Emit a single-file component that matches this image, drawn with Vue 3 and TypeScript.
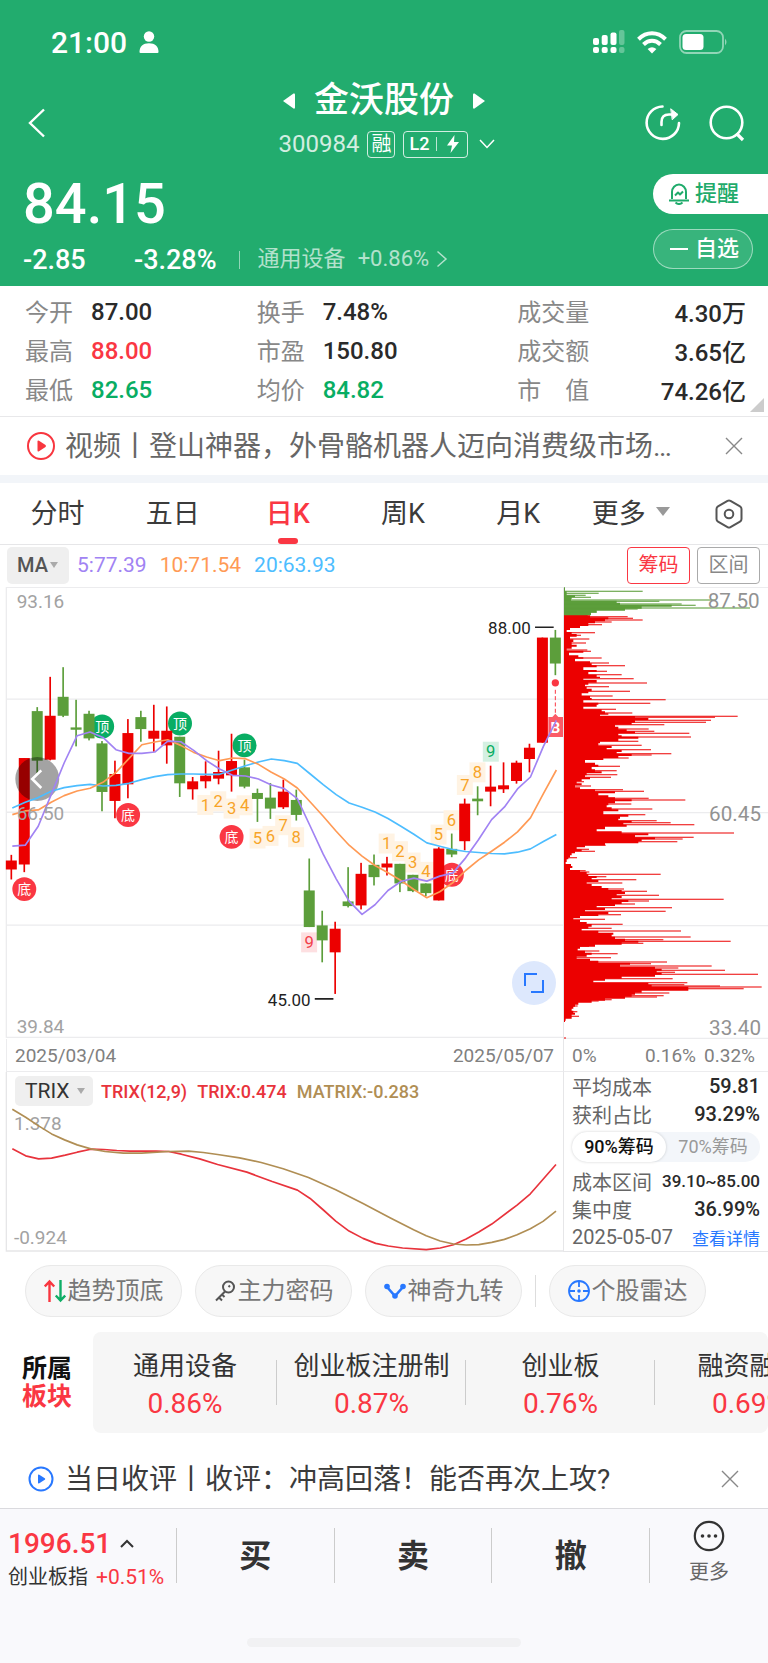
<script setup lang="ts">
import { ref } from 'vue'

type Tone = 'up' | 'down' | 'plain'
interface Quote { label: string; value: string; tone: Tone }
type Pair = [number, number]

const quotes: Quote[] = [
  { label: '今开', value: '87.00', tone: 'plain' },
  { label: '换手', value: '7.48%', tone: 'plain' },
  { label: '成交量', value: '4.30万', tone: 'plain' },
  { label: '最高', value: '88.00', tone: 'up' },
  { label: '市盈', value: '150.80', tone: 'plain' },
  { label: '成交额', value: '3.65亿', tone: 'plain' },
  { label: '最低', value: '82.65', tone: 'down' },
  { label: '均价', value: '84.82', tone: 'down' },
  { label: '市　值', value: '74.26亿', tone: 'plain' },
]

const tabs = ['分时', '五日', '日K', '周K', '月K']
const activeTab = ref('日K')
const chipRange = ref('90%筹码')

const sectors = [
  { name: '通用设备', change: '0.86%' },
  { name: '创业板注册制', change: '0.87%' },
  { name: '创业板', change: '0.76%' },
  { name: '融资融券', change: '0.69%' },
]
const trades = ['买', '卖', '撤']

const STEP = 38.93
const cx = (i: number) => 34 + i * STEP

// wick top, body top, body bottom, wick bottom, rising
const candles: [number, number, number, number, number][] = [
  [826, 843, 870, 900, 1], [535, 535, 855, 878, 1], [382, 394, 543, 580, 0], [291, 408, 540, 542, 1],
  [262, 351, 408, 412, 0], [360, 443, 450, 500, 0], [393, 402, 476, 482, 0], [484, 491, 637, 695, 0],
  [543, 583, 664, 716, 1], [418, 460, 614, 656, 1], [393, 412, 448, 486, 0], [375, 453, 477, 516, 1],
  [380, 453, 497, 552, 1], [471, 471, 611, 652, 0], [592, 605, 629, 660, 1], [545, 588, 605, 626, 1],
  [513, 577, 597, 614, 1], [462, 544, 587, 636, 1], [540, 563, 621, 626, 0], [627, 640, 658, 727, 0],
  [610, 654, 687, 718, 0], [600, 636, 683, 688, 1], [630, 661, 706, 723, 0], [837, 933, 1043, 1043, 0],
  [994, 1038, 1083, 1149, 0], [1027, 1048, 1119, 1244, 1], [863, 966, 980, 984, 0], [850, 883, 978, 990, 1],
  [825, 856, 893, 918, 0], [832, 852, 864, 888, 1], [853, 853, 912, 938, 0], [886, 886, 935, 938, 0],
  [912, 912, 941, 950, 0], [803, 807, 963, 963, 1], [762, 808, 825, 833, 0], [657, 672, 785, 812, 1],
  [620, 657, 665, 707, 0], [558, 621, 636, 680, 1], [548, 617, 629, 640, 1], [543, 549, 604, 612, 1],
  [492, 504, 538, 578, 1], [173, 173, 489, 489, 1], [150, 173, 251, 286, 0],
]

const ma5 = [800, 797, 740, 645, 550, 468, 457, 473, 510, 521, 521, 517, 484, 486, 512, 543, 568, 587, 589, 598, 616, 627, 657, 740, 824, 898, 965, 1005, 976, 933, 906, 896, 905, 890, 881, 835, 780, 720, 682, 628, 592, 500, 422]
const ma10 = [705, 694, 691, 668, 648, 634, 626, 608, 578, 537, 495, 487, 480, 497, 518, 532, 543, 535, 537, 554, 578, 598, 625, 667, 710, 755, 797, 830, 858, 880, 903, 930, 955, 937, 910, 873, 841, 815, 788, 757, 715, 642, 571]
const ma20 = [685, 668, 654, 635, 624, 618, 614, 619, 617, 611, 600, 591, 585, 583, 583, 584, 584, 571, 558, 547, 538, 543, 551, 583, 615, 645, 670, 683, 697, 717, 740, 764, 790, 800, 810, 816, 819, 822, 823, 818, 808, 786, 765]
const series = (ys: number[]) => ys.map((y, i) => `${(cx(i) + 3).toFixed(1)},${y}`).join(' ')
const averages = [
  { color: '#4dbdff', points: series(ma20) },
  { color: '#ff9a55', points: series(ma10) },
  { color: '#a183f3', points: series(ma5) },
]

const marks = [
  { x: 73, y: 929, t: '底' }, { x: 385, y: 706, t: '底' }, { x: 696, y: 772, t: '底' }, { x: 1358, y: 886, t: '底' },
  { x: 307, y: 440, t: '顶' }, { x: 541, y: 431, t: '顶' }, { x: 735, y: 497, t: '顶' },
]

const counts = [
  { x: 617, y: 675, t: '1' }, { x: 656, y: 664, t: '2' }, { x: 696, y: 686, t: '3' }, { x: 735, y: 676, t: '4' },
  { x: 774, y: 776, t: '5' }, { x: 813, y: 768, t: '6' }, { x: 851, y: 736, t: '7' }, { x: 890, y: 772, t: '8' },
  { x: 929, y: 1088, t: '9', k: 'low' },
  { x: 1162, y: 791, t: '1' }, { x: 1202, y: 814, t: '2' }, { x: 1240, y: 848, t: '3' }, { x: 1280, y: 876, t: '4' },
  { x: 1318, y: 764, t: '5' }, { x: 1357, y: 721, t: '6' }, { x: 1397, y: 615, t: '7' }, { x: 1435, y: 577, t: '8' },
  { x: 1475, y: 515, t: '9', k: 'high' },
]

// Holding cost distribution: [price offset, extent]
const greenBase: Pair[] = [[22, 30], [34, 35], [46, 60], [52, 50], [58, 48], [62, 185], [68, 195], [74, 350], [80, 260], [86, 210], [92, 125], [98, 108], [106, 98]]
const greenPeaks: Pair[] = [[34, 263], [40, 131], [46, 92], [52, 108], [60, 480], [64, 313], [72, 380], [76, 422], [84, 585], [87, 248], [96, 125]]
const redBase: Pair[] = [
  [106, 105], [112, 160], [118, 150], [124, 120], [130, 100], [138, 75], [144, 45], [150, 35], [156, 50], [162, 65], [170, 45], [178, 55], [186, 50], [194, 65], [200, 50], [206, 35], [212, 85], [218, 42], [226, 70], [232, 85], [236, 60], [244, 105], [250, 110], [256, 125], [262, 85], [270, 125], [276, 100], [284, 125], [290, 135], [294, 85], [300, 125], [308, 100], [314, 90], [320, 95], [326, 110], [334, 100], [340, 80], [348, 105], [354, 110], [360, 85], [368, 130], [374, 125], [380, 85], [388, 140], [394, 150], [400, 160], [404, 135], [408, 240], [414, 280], [420, 240], [428, 230], [434, 180], [440, 190], [448, 215], [454, 240], [460, 190], [466, 200], [470, 250], [476, 190], [484, 135], [490, 130], [498, 170], [504, 155], [510, 200], [516, 185], [522, 230], [528, 190], [534, 145], [540, 90], [548, 120], [554, 130], [560, 110], [568, 120], [574, 140], [580, 95], [586, 90], [592, 105], [598, 80], [604, 65], [610, 80], [616, 60], [622, 75], [628, 120], [634, 180], [640, 130], [646, 160], [652, 180], [658, 230], [664, 180], [670, 160], [676, 155], [682, 170], [688, 190], [694, 145],
  [698, 145], [704, 220], [710, 195], [716, 190], [722, 230], [728, 205], [734, 215], [740, 150], [748, 125], [754, 200], [760, 280], [766, 240], [772, 300], [778, 260], [784, 250], [790, 150], [796, 90], [802, 65], [808, 80], [814, 60], [820, 50], [826, 45], [832, 40], [838, 35], [846, 32], [852, 48], [858, 52], [864, 45], [870, 75], [876, 95], [882, 100], [888, 125], [894, 110], [900, 130], [906, 95], [912, 110], [918, 140], [924, 160], [930, 200], [936, 210], [942, 185], [948, 200], [954, 170], [960, 220], [966, 200], [972, 180], [978, 125], [984, 150], [990, 90], [996, 160], [1002, 130], [1008, 75], [1014, 55], [1020, 75], [1026, 95], [1032, 110], [1040, 100], [1046, 80], [1052, 130], [1058, 175], [1064, 170], [1070, 180], [1076, 210], [1082, 250], [1088, 200], [1094, 120], [1100, 75], [1106, 68], [1112, 90], [1118, 110], [1124, 95], [1130, 65], [1136, 105], [1142, 130], [1148, 225], [1154, 195], [1160, 300], [1166, 320], [1172, 305], [1178, 320], [1184, 300], [1190, 200], [1196, 150], [1202, 115], [1208, 280], [1214, 290], [1220, 400], [1226, 400], [1232, 260], [1238, 240], [1244, 230], [1250, 210], [1256, 150], [1262, 110], [1268, 70], [1274, 60], [1280, 55], [1286, 50], [1292, 55], [1298, 60], [1304, 50], [1310, 50], [1316, 32], [1322, 30],
]
const redPeaks: Pair[] = [
  [110, 218], [115, 234], [120, 263], [126, 170], [134, 141], [158, 120], [166, 78], [177, 103], [189, 93], [210, 97], [214, 108], [234, 140], [249, 162], [257, 210], [274, 156], [284, 200], [296, 236], [309, 276], [320, 162], [334, 225], [348, 173], [359, 332], [370, 286], [388, 183], [399, 232], [409, 548], [412, 480], [421, 468], [427, 453], [434, 328], [447, 281], [454, 298], [460, 403], [471, 408], [484, 250], [496, 260], [509, 288], [521, 349], [525, 290], [534, 221], [559, 195], [572, 185], [584, 187], [592, 168], [605, 87], [618, 108], [629, 204], [634, 267], [655, 281], [660, 391], [672, 229], [687, 292], [704, 271],
  [722, 305], [728, 347], [734, 418], [759, 537], [772, 416], [777, 383], [785, 367], [796, 152], [808, 102], [814, 120], [833, 66], [872, 92], [876, 103], [883, 317], [890, 154], [899, 244], [909, 202], [927, 207], [934, 276], [946, 312], [958, 506], [963, 282], [972, 240], [983, 351], [994, 332], [1004, 198], [1018, 150], [1033, 203], [1045, 170], [1053, 378], [1071, 407], [1079, 325], [1084, 527], [1090, 265], [1099, 102], [1113, 133], [1121, 188], [1133, 168], [1146, 336], [1151, 288], [1158, 470], [1164, 370], [1171, 510], [1177, 360], [1183, 609], [1196, 353], [1208, 397], [1214, 388], [1218, 495], [1221, 620], [1226, 566], [1239, 343], [1247, 326], [1251, 306], [1259, 170], [1263, 131], [1278, 68], [1295, 67], [1309, 72], [1374, 33],
]
const outline = (rows: Pair[]) => {
  const sorted = [...rows].sort((a, b) => a[0] - b[0])
  return `M27 ${sorted[0][0]} ` + sorted.map(([y, x]) => `V${y} H${x}`).join(' ') + ` V${sorted[sorted.length - 1][0] + 4} H27 Z`
}
const greenOutline = outline(greenBase)
const redOutline = outline(redBase)

const trixLine: Pair[] = [[34, 267], [71, 288], [106, 297], [142, 295], [180, 286], [213, 277], [250, 268], [286, 269], [322, 272], [358, 274], [430, 274], [465, 275], [500, 283], [550, 297], [600, 314], [680, 337], [750, 365], [820, 391], [855, 416], [890, 450], [925, 484], [962, 514], [1000, 536], [1035, 551], [1070, 559], [1110, 565], [1175, 570], [1213, 565], [1250, 555], [1285, 538], [1320, 517], [1355, 493], [1425, 436], [1462, 402], [1532, 314]]
const matrixLine: Pair[] = [[34, 148], [71, 172], [106, 198], [142, 222], [178, 240], [213, 255], [250, 267], [290, 275], [340, 280], [390, 280], [465, 275], [520, 274], [560, 278], [600, 284], [660, 294], [720, 308], [780, 327], [850, 353], [925, 390], [1000, 431], [1075, 474], [1140, 510], [1175, 528], [1213, 544], [1250, 553], [1285, 556], [1320, 555], [1355, 548], [1390, 539], [1425, 525], [1462, 507], [1497, 485], [1532, 454]]
const widen = (pts: Pair[]) => pts.map(([x, y]) => `${Math.round(x * 1.0905)},${y}`).join(' ')
</script>

<template>
  <div class="app">
    <header class="hero">
      <div class="status">
        <div class="clock">
          <span>21:00</span>
          <svg width="20" height="22" viewBox="0 0 20 22" fill="#fff"><circle cx="10" cy="5.5" r="5.2" /><path d="M0.5 21C0.5 15 4 12.2 10 12.2S19.5 15 19.5 21Q19.5 22 18.5 22H1.5Q.5 22 .5 21Z" /></svg>
        </div>
        <div class="phone">
          <svg width="32" height="24" viewBox="0 0 32 24" fill="#fff">
            <rect x="0" y="8" width="6" height="7" rx="2" /><rect x="8.700" y="5" width="6" height="10" rx="2" /><rect x="17.500" y="2.500" width="6" height="12.500" rx="2" /><rect x="26" y="0" width="5.500" height="15" rx="2" opacity=".3" />
            <rect x="0" y="17" width="6" height="6" rx="2" /><rect x="8.700" y="17" width="6" height="6" rx="2" /><rect x="17.500" y="17" width="6" height="6" rx="2" /><rect x="26" y="17" width="5.500" height="6" rx="2" opacity=".3" />
          </svg>
          <svg width="30" height="23" viewBox="0 0 30 23" fill="none" stroke="#fff" stroke-width="4">
            <path d="M1.500 8.200Q7.500 2.300 15 2.300T28.500 8.200" /><path d="M6.500 13.500Q10.300 9.800 15 9.800T23.500 13.500" /><path d="M15 22.500L10.600 18Q15 14.300 19.400 18Z" fill="#fff" stroke="none" />
          </svg>
          <svg width="49" height="24" viewBox="0 0 49 24"><rect x="1" y="1" width="43" height="22" rx="6.500" fill="none" stroke="#fff" stroke-width="1.800" opacity=".5" /><rect x="3.500" y="4" width="21" height="16" rx="3.500" fill="#fff" /><path d="M46 8.500Q49 12 46 15.500Z" fill="#fff" opacity=".5" /></svg>
        </div>
      </div>

      <nav class="nav">
        <button class="bare back" aria-label="返回"><svg width="18" height="30" viewBox="0 0 18 30" fill="none" stroke="#fff" stroke-width="2.400"><path d="M16 1.500L2 15L16 28.500" /></svg></button>
        <div class="title">
          <div class="name-row">
            <button class="bare" aria-label="上一只"><svg width="12" height="16" viewBox="0 0 12 16" fill="#fff"><path d="M0 8L10.500 .5Q12 0 12 1.500V14.500Q12 16 10.500 15.500Z" /></svg></button>
            <h1>金沃股份</h1>
            <button class="bare" aria-label="下一只"><svg width="12" height="16" viewBox="0 0 12 16" fill="#fff"><path d="M12 8L1.500 .5Q0 0 0 1.500V14.500Q0 16 1.500 15.500Z" /></svg></button>
          </div>
          <div class="code-row">
            <span class="code">300984</span>
            <span class="tag">融</span>
            <span class="tag level">L2<i></i><svg width="14" height="18" viewBox="0 0 14 18" fill="#fff"><path d="M8.500 0L1 10.500H6L4.500 18L13 7H8Z" /></svg></span>
            <svg width="16" height="10" viewBox="0 0 16 10" fill="none" stroke="#fff" stroke-width="1.500"><path d="M1 1L8 8.500L15 1" /></svg>
          </div>
        </div>
        <div class="tools">
          <button class="bare" aria-label="分享"><svg width="38" height="38" viewBox="0 0 38 38" fill="none" stroke="#fff" stroke-width="2.600" stroke-linecap="round"><path d="M18.500 2.500A16.200 16.200 0 1 0 35 19" /><path d="M17.500 21V18Q17.500 10.500 25 10.500H31" /><path d="M27 5L34 10.500L28.500 15.500Z" fill="#fff" stroke-width="1" /></svg></button>
          <button class="bare" aria-label="搜索"><svg width="38" height="38" viewBox="0 0 38 38" fill="none" stroke="#fff" stroke-width="2.600"><circle cx="18.500" cy="18.500" r="15.800" /><path d="M28.500 29.500L35 36" stroke-width="3.200" /></svg></button>
        </div>
      </nav>

      <div class="price-block">
        <div>
          <div class="price">84.15</div>
          <div class="delta">
            <span class="diff">-2.85</span><span class="pct">-3.28%</span><i></i>
            <a href="#sector" class="industry">通用设备<b>+0.86%</b><svg width="12" height="18" viewBox="0 0 12 18" fill="none" stroke="currentColor" stroke-width="1.500"><path d="M1.500 1.500L10 9L1.500 16.500" /></svg></a>
          </div>
        </div>
        <div class="pills">
          <button class="pill alert"><svg width="22" height="22" viewBox="0 0 22 22" fill="none" stroke="#1fab6b" stroke-width="2" stroke-linejoin="round"><path d="M4 16V9A7 7.500 0 0 1 18 9V16" /><path d="M1 17.500H21" /><path d="M7.500 19.500Q11 22.500 14.500 19.500" /><path d="M7 12.500L10 9.500L12 11.500L15 8.500" /></svg>提醒</button>
          <button class="pill watch"><i></i>自选</button>
        </div>
      </div>
    </header>

    <dl class="quotes">
      <div v-for="q in quotes" :key="q.label"><dt>{{ q.label }}</dt><dd :class="q.tone">{{ q.value }}</dd></div>
      <svg class="corner" width="14" height="14" viewBox="0 0 14 14"><path d="M14 0V14H0Z" fill="#ccc" /></svg>
    </dl>

    <div class="news top-news">
      <svg width="30" height="30" viewBox="0 0 30 30"><circle cx="15" cy="15" r="13" fill="none" stroke="#f8363f" stroke-width="2" /><path d="M11.500 10.500Q11.500 9 13 9.800L19.500 14Q20.500 15 19.500 16L13 20.200Q11.500 21 11.500 19.500Z" fill="#f8363f" /></svg>
      <a href="#video">视频丨登山神器，外骨骼机器人迈向消费级市场…</a>
      <button class="bare" aria-label="关闭"><svg width="18" height="18" viewBox="0 0 18 18" stroke="#888" stroke-width="1.400"><path d="M1 1L17 17M17 1L1 17" /></svg></button>
    </div>

    <div class="tabs" role="tablist">
      <button v-for="t in tabs" :key="t" class="bare tab" role="tab" :aria-selected="activeTab === t" :class="{ on: activeTab === t }" @click="activeTab = t">{{ t }}</button>
      <button class="bare more">更多<svg width="14" height="9" viewBox="0 0 14 9"><path d="M0 0H14L7 9Z" fill="#999" /></svg></button>
      <button class="bare gear" aria-label="设置"><svg width="28" height="30" viewBox="0 0 28 30" fill="none" stroke="#555" stroke-width="2"><path d="M12.500 1.800Q14 1 15.500 1.800L25 7.300Q26.500 8.200 26.500 10V20Q26.500 21.800 25 22.700L15.500 28.200Q14 29 12.500 28.200L3 22.700Q1.500 21.800 1.500 20V10Q1.500 8.200 3 7.300Z" /><circle cx="14" cy="15" r="4.300" /></svg></button>
    </div>

    <div class="ma-row">
      <button class="select-btn ma">MA<svg width="8" height="6" viewBox="0 0 8 6"><path d="M0 0H8L4 6Z" fill="#aaa" /></svg></button>
      <span class="v5">5:77.39</span><span class="v10">10:71.54</span><span class="v20">20:63.93</span>
      <button class="box-btn red">筹码</button>
      <button class="box-btn">区间</button>
    </div>

    <section class="market">
      <div class="kline">
        <svg viewBox="0 21 1692 1356">
          <g stroke="#ececee" stroke-width="4">
            <path d="M18 22H1692M18 358H1692M18 698H1692M18 1037H1692M18 1375H1692M19 22V1376" />
          </g>
          <g v-for="m in marks" :key="`${m.x}`">
            <circle :cx="m.x" :cy="m.y" r="36" :fill="m.t === '底' ? '#fa3743' : '#08ad63'" />
            <text :x="m.x" :y="m.y + 16" class="mark">{{ m.t }}</text>
          </g>
          <g v-for="c in counts" :key="`${c.x}-${c.t}`" class="count" :class="c.k">
            <rect :x="c.x - 24" :y="c.y - 29" width="48" height="60" />
            <text :x="c.x" :y="c.y + 18">{{ c.t }}</text>
          </g>
          <g v-for="(k, i) in candles" :key="i" :fill="k[4] ? '#ec0000' : '#5c9e3b'">
            <rect :x="cx(i) - 2.500" :y="k[0]" width="5" :height="k[3] - k[0]" />
            <rect :x="cx(i) - 16.500" :y="k[1]" width="33" :height="k[2] - k[1]" />
          </g>
          <circle cx="112" cy="598" r="66" fill="#000" opacity=".36" />
          <path d="M124 572L97 598L124 625" fill="none" stroke="#fff" stroke-width="8" />
          <path d="M1648 412H1660L1669 402L1678 412H1692V472H1648Z" fill="#fb5b67" />
          <text x="1669" y="460" class="mark buy">B</text>
          <circle cx="1669" cy="309" r="11" fill="#fa3743" />
          <path d="M1669 330V402" stroke="#fa3743" stroke-width="3" stroke-dasharray="12 7" />
          <polyline v-for="a in averages" :key="a.color" :points="a.points" fill="none" :stroke="a.color" stroke-width="5" stroke-linejoin="round" />
          <path d="M1608 142H1664M946 1259H1002" stroke="#222" stroke-width="5" />
          <text x="1595" y="163" class="extreme">88.00</text>
          <text x="933" y="1279" class="extreme">45.00</text>
          <g class="axis"><text x="50" y="84">93.16</text><text x="50" y="722">66.50</text><text x="50" y="1362">39.84</text></g>
        </svg>
        <button class="expand" aria-label="全屏"><svg width="20" height="20" viewBox="0 0 20 20" fill="none" stroke="#2878ff" stroke-width="2"><path d="M1 13V1H13M19 7V19H7" /></svg></button>
      </div>
      <svg class="chips" viewBox="27 21 612 1356">
        <path d="M27 22H639M27 358H639M27 698H639M27 1037H639M27 1375H639" stroke="#ececee" stroke-width="4" />
        <g fill="#5c9e3b"><path :d="greenOutline" /><rect v-for="p in greenPeaks" :key="p[0]" x="27" :y="p[0] - 2" :width="p[1] - 27" height="4" opacity=".8" /></g>
        <g fill="#ec0000"><path :d="redOutline" /><rect v-for="p in redPeaks" :key="p[0]" x="27" :y="p[0] - 2" :width="p[1] - 27" height="4" opacity=".75" /></g>
        <g class="axis right"><text x="614" y="84">87.50</text><text x="618" y="722">60.45</text><text x="618" y="1365">33.40</text></g>
      </svg>

      <div class="dates"><time>2025/03/04</time><time>2025/05/07</time></div>
      <div class="scale"><span>0%</span><span>0.16%</span><span>0.32%</span></div>

      <div class="trix">
        <svg viewBox="0 36 1692 540">
          <path d="M19 36V574H1692" fill="none" stroke="#e6e6e8" stroke-width="4" />
          <g class="axis"><text x="42" y="209">1.378</text><text x="42" y="553">-0.924</text></g>
          <polyline :points="widen(trixLine)" fill="none" stroke="#e8333c" stroke-width="5" stroke-linejoin="round" />
          <polyline :points="widen(matrixLine)" fill="none" stroke="#b08e54" stroke-width="5" stroke-linejoin="round" />
        </svg>
        <div class="trix-head">
          <button class="select-btn">TRIX<svg width="8" height="6" viewBox="0 0 8 6"><path d="M0 0H8L4 6Z" fill="#aaa" /></svg></button>
          <span>TRIX(12,9)</span><span>TRIX:0.474</span><span class="tan">MATRIX:-0.283</span>
        </div>
      </div>
      <div class="cost">
        <p><span>平均成本</span><b>59.81</b></p>
        <p><span>获利占比</span><b>93.29%</b></p>
        <div class="switch">
          <button v-for="r in ['90%筹码', '70%筹码']" :key="r" :class="{ on: chipRange === r }" @click="chipRange = r">{{ r }}</button>
        </div>
        <p><span>成本区间</span><b class="range">39.10~85.00</b></p>
        <p><span>集中度</span><b>36.99%</b></p>
        <p><time>2025-05-07</time><a href="#detail">查看详情</a></p>
      </div>
    </section>

    <div class="signals">
      <button><svg width="22" height="24" viewBox="0 0 22 24" fill="none" stroke-width="2.400"><path d="M5.500 23V3M.8 7.500L5.500 2.500L10.200 7.500" stroke="#f8363f" /><path d="M16.500 1V21M11.800 16.500L16.500 21.500L21.200 16.500" stroke="#0fae66" /></svg>趋势顶底</button>
      <button><svg width="22" height="24" viewBox="0 0 22 24" fill="none" stroke="#555" stroke-width="2"><circle cx="14.500" cy="8" r="5.500" /><path d="M11 12.500L2 21.500M5 18.500L8 21.500M8 15.500L10.500 18" /><path d="M14.500 8L16 6.500" /></svg>主力密码</button>
      <button><svg width="22" height="24" viewBox="0 0 22 24" fill="#2878ff"><path d="M3 8L11 17L19 8" fill="none" stroke="#2878ff" stroke-width="2.600" /><circle cx="3" cy="7.500" r="2.800" /><circle cx="11" cy="17" r="2.800" /><circle cx="19" cy="7.500" r="2.800" /></svg>神奇九转</button>
      <i></i>
      <button><svg width="22" height="24" viewBox="0 0 22 24" fill="none" stroke="#2878ff" stroke-width="1.800"><circle cx="11" cy="12" r="10" /><path d="M11 2V8M11 16V22M1 12H7M15 12H21" /><circle cx="11" cy="12" r="1.800" fill="#2878ff" stroke="none" /></svg>个股雷达</button>
    </div>

    <section class="sectors" id="sector">
      <h2>所属<em>板块</em></h2>
      <ul><li v-for="s in sectors" :key="s.name"><span>{{ s.name }}</span><b>{{ s.change }}</b></li></ul>
    </section>

    <div class="news end-news">
      <svg width="30" height="30" viewBox="0 0 30 30"><circle cx="15" cy="15" r="11.500" fill="none" stroke="#2878ff" stroke-width="2" /><path d="M12 11.500Q12 10 13.300 10.800L18.800 14.300Q19.700 15 18.800 15.700L13.300 19.200Q12 20 12 18.500Z" fill="#2878ff" /></svg>
      <a href="#review">当日收评丨收评：冲高回落！能否再次上攻?</a>
      <button class="bare" aria-label="关闭"><svg width="18" height="18" viewBox="0 0 18 18" stroke="#888" stroke-width="1.400"><path d="M1 1L17 17M17 1L1 17" /></svg></button>
    </div>

    <footer class="bar">
      <div class="bar-row">
        <button class="bare index">
          <span class="index-value">1996.51<svg width="14" height="9" viewBox="0 0 14 9" fill="none" stroke="#333" stroke-width="2"><path d="M1 8L7 2L13 8" /></svg></span>
          <span class="index-name">创业板指<b>+0.51%</b></span>
        </button>
        <button v-for="t in trades" :key="t" class="bare trade">{{ t }}</button>
        <button class="bare other"><svg width="32" height="32" viewBox="0 0 32 32" fill="#333"><circle cx="16" cy="16" r="14.200" fill="none" stroke="#333" stroke-width="2.200" /><circle cx="9.500" cy="16" r="1.800" /><circle cx="16" cy="16" r="1.800" /><circle cx="22.500" cy="16" r="1.800" /></svg>更多</button>
      </div>
      <div class="home"></div>
    </footer>
  </div>
</template>

<style>
body { background: #fff; }
</style>

<style scoped>
* { box-sizing: border-box; }
.app { font-family: Roboto, "Noto Sans CJK SC", sans-serif; color: #333; background: #fff; overflow: hidden; }
h1, h2, p, ul, dl, dd { margin: 0; padding: 0; }
ul { list-style: none; }
em, i { font-style: normal; }
b { font-weight: 500; }
svg { display: block; flex: none; }
a { text-decoration: none; color: inherit; }
button { font: inherit; color: inherit; cursor: pointer; }
.bare { border: 0; padding: 0; background: none; }

.hero { background: #22ac6e; color: #fff; }
.status { height: 80px; padding: 4px 40px 0 51px; display: flex; align-items: center; justify-content: space-between; }
.clock { display: flex; align-items: center; gap: 12px; font-size: 30px; font-weight: 500; }
.phone { display: flex; align-items: center; gap: 12px; }
.nav { height: 86px; display: grid; grid-template-columns: 1fr auto 1fr; align-items: center; padding: 0 22px 0 28px; }
.back { justify-self: start; }
.name-row { height: 42px; display: flex; align-items: center; justify-content: center; gap: 19px; padding-right: 6px; }
h1 { font-size: 35px; font-weight: 500; line-height: 42px; }
.code-row { height: 44px; display: flex; align-items: center; gap: 8px; }
.code { font-size: 24px; opacity: .8; }
.tag { height: 27px; border: 1px solid rgba(255, 255, 255, .8); border-radius: 4px; padding: 0 3px; font-size: 20px; line-height: 24px; }
.level { display: flex; align-items: center; padding: 0 7px 0 5px; margin-right: 3px; font-weight: 500; font-size: 18px; }
.level i { width: 1px; height: 14px; background: #fff; opacity: .7; margin: 0 9px 0 7px; }
.tools { justify-self: end; display: flex; gap: 26px; }
.price-block { height: 120px; display: flex; justify-content: space-between; padding-left: 23px; }
.price { font-size: 56px; font-weight: 500; line-height: 76px; height: 76px; }
.delta { height: 36px; display: flex; align-items: center; font-size: 27px; font-weight: 500; }
.diff { width: 111px; }
.delta i { width: 1px; height: 18px; background: #fff; opacity: .5; margin: 0 18px 0 22px; }
.industry { display: flex; align-items: center; font-size: 22px; line-height: 30px; padding-bottom: 3px; font-weight: 400; opacity: .65; }
.industry b { font-weight: 400; margin: 0 7px 0 12px; }
.pills { padding-top: 8px; width: 115px; display: flex; flex-direction: column; gap: 15px; }
.pill { height: 40px; border: 0; font-size: 22px; font-weight: 500; display: flex; align-items: center; line-height: 30px; }
.alert { background: #fff; color: #1fab6b; border-radius: 20px 0 0 20px; padding: 0 0 0 15px; gap: 5px; }
.watch { width: 100px; border: 1px solid rgba(255, 255, 255, .5); background: rgba(255, 255, 255, .1); color: #fff; border-radius: 20px; padding: 0 0 0 16px; gap: 7px; }
.watch i { width: 18px; height: 2px; background: #fff; }

.quotes { position: relative; display: grid; grid-template-columns: 232fr 261fr 229fr; grid-auto-rows: 39px; padding: 6px 22px 7px 25px; border-bottom: 1px solid #e8e8ea; }
.quotes div { display: flex; align-items: center; gap: 18px; font-size: 24px; }
.quotes div:nth-of-type(3n) { justify-content: space-between; }
dt { color: #888; padding-bottom: 3px; }
dd { font-weight: 500; color: #2a2a2a; }
dd.up { color: #fa3743; }
dd.down { color: #08ad63; }
.corner { position: absolute; right: 4px; bottom: 4px; }

.news { display: flex; align-items: center; padding: 0 25px 0 26px; gap: 9px; font-size: 28px; line-height: 42px; }
.news a { flex: 1; min-width: 0; white-space: nowrap; overflow: hidden; padding-top: 2px; }
.top-news { height: 66px; color: #666; border-bottom: 8px solid #f2f5f9; }
.end-news { height: 58px; color: #3b3b3b; padding-right: 29px; }

.tabs { height: 62px; display: flex; border-bottom: 1px solid #e6e6e8; font-size: 27px; color: #3b3b3b; }
.tab { flex: 115 1 0; position: relative; height: 62px; padding-bottom: 5px; }
.tab.on { color: #fa3743; font-weight: 500; }
.tab.on::after { content: ""; position: absolute; left: 50%; bottom: 1px; width: 20px; height: 6px; margin-left: -10px; border-radius: 3px; background: #fa3743; }
.more { flex: 110 1 0; display: flex; align-items: center; justify-content: center; gap: 10px; padding: 0 4px 4px 0; }
.gear { flex: 78 1 0; display: flex; align-items: center; justify-content: center; }

.ma-row { height: 42px; display: flex; align-items: center; gap: 13px; padding: 0 8px 2px 7px; font-size: 21px; }
.select-btn { border: 0; border-radius: 5px; background: #efefef; display: flex; align-items: center; }
.ma { width: 62px; height: 37px; padding: 0 0 0 10px; gap: 2px; margin-right: -5px; font-weight: 500; font-size: 20px; color: #555; }
.v5 { color: #a183f3; }
.v10 { color: #ff9a55; }
.v20 { color: #4dbdff; flex: 1; }
.box-btn { width: 63px; height: 37px; border: 1px solid #aaa; border-radius: 4px; background: #fff; color: #888; font-size: 20px; padding: 0; line-height: 32px; }
.box-btn.red { color: #fa3743; border-color: #fa3743; margin-right: -6px; }

.market { display: grid; grid-template-columns: 564fr 204fr; }
.market > div:nth-child(odd) { border-right: 1px solid #e6e6e8; }
.kline { position: relative; }
.kline > svg, .chips, .trix > svg { width: 100%; height: auto; }
.mark { fill: #fff; font-size: 42px; text-anchor: middle; }
.buy { font-weight: 700; font-size: 46px; }
.count rect { fill: #fff3e3; }
.count text { fill: #f7a428; font-size: 50px; text-anchor: middle; }
.count.low rect { fill: #fddfe1; }
.count.low text { fill: #f2404b; }
.count.high rect { fill: #d4f0e2; }
.count.high text { fill: #08ad63; }
.extreme { font-size: 51px; fill: #222; text-anchor: end; }
.axis text { font-size: 57px; fill: #a2a2a2; }
.axis.right text { font-size: 62px; fill: #929292; text-anchor: end; }
.expand { position: absolute; right: 7px; bottom: 34px; width: 44px; height: 44px; border: 0; border-radius: 22px; background: #dde8fd; display: grid; place-items: center; padding: 0; }
.dates, .scale { height: 33px; display: flex; align-items: center; justify-content: space-between; color: #808080; font-size: 19px; border-bottom: 1px solid #ececee; }
.dates { margin-left: 6px; padding: 0 9px 0 8px; border-left: 1px solid #ececee; }
.scale { padding: 0 13px 0 8px; gap: 8px; font-size: 19px; }
.scale span:first-child { flex: 1; }
.trix { display: grid; }
.trix > * { grid-area: 1 / 1; }
.trix-head { align-self: start; display: flex; align-items: center; gap: 10px; padding: 4px 0 0 15px; font-size: 18px; font-weight: 500; color: #e8333c; }
.trix-head .select-btn { width: 78px; height: 30px; padding: 0 0 0 10px; gap: 7px; font-size: 21px; font-weight: 400; color: #333; margin-right: -2px; }
.tan { color: #b08e54; }
.cost { padding: 0 8px; border-bottom: 1px solid #e6e6e8; font-size: 20px; color: #666; display: flex; flex-direction: column; }
.cost p { height: 28px; display: flex; align-items: center; justify-content: space-between; white-space: nowrap; }
.cost b { color: #2a2a2a; }
.cost .range { font-size: 17px; }
.cost a { color: #2878ff; font-size: 17px; }
.switch { height: 30px; margin: 4px 0 5px; border-radius: 15px; background: #f3f6fa; display: flex; }
.switch button { flex: 1; border: 0; border-radius: 15px; background: none; color: #999; font-size: 18px; padding: 0; line-height: 26px; }
.switch .on { background: #fff; color: #111; font-weight: 500; box-shadow: 0 0 3px rgba(0, 0, 0, .18); }

.signals { height: 80px; padding: 0 25px 3px; display: flex; align-items: center; gap: 13px; }
.signals button { width: 157px; height: 52px; border: 1px solid #e9e9e9; border-radius: 26px; background: #f7f7f7; color: #777; font-size: 24px; line-height: 34px; padding: 0; display: flex; align-items: center; justify-content: center; gap: 2px; white-space: nowrap; }
.signals i { width: 1px; height: 32px; background: #ddd; }
.sectors { display: flex; height: 101px; margin-bottom: 17px; }
h2 { width: 93px; flex: none; padding-left: 22px; font-size: 25px; line-height: 28px; color: #111; display: flex; flex-direction: column; justify-content: center; }
h2 em { color: #fa3743; }
.sectors ul { flex: 1; min-width: 0; overflow: hidden; display: flex; background: #f6f6f6; border-radius: 8px; }
li { flex: 0 0 189px; position: relative; display: flex; flex-direction: column; align-items: center; justify-content: center; padding-top: 5px; font-size: 26px; line-height: 38px; }
li:first-child { flex-basis: 184px; }
li::after { content: ""; position: absolute; right: 0; top: 28px; height: 45px; width: 1px; background: #ccc; }
li b { color: #fa3743; font-weight: 400; font-size: 28px; }

.bar { background: #f9f9fc; border-top: 1px solid #dadade; padding-bottom: 16px; }
.bar-row { height: 93px; display: flex; align-items: center; }
.index { width: 176px; flex: none; padding: 6px 0 0 8px; text-align: left; }
.index-value { display: flex; align-items: center; gap: 9px; font-size: 28px; line-height: 36px; color: #fa3743; font-weight: 500; }
.index-name { display: flex; align-items: center; gap: 8px; font-size: 20px; line-height: 30px; white-space: nowrap; }
.index-name b { color: #fa3743; font-weight: 400; font-size: 21px; }
.trade { flex: 158 1 0; height: 55px; border-left: 1px solid #ccc; font-size: 32px; font-weight: 700; line-height: 50px; }
.other { flex: 119 1 0; height: 55px; border-left: 1px solid #ccc; font-size: 20px; line-height: 28px; color: #666; display: flex; flex-direction: column; align-items: center; justify-content: center; gap: 6px; padding-bottom: 6px; }
.home { width: 274px; height: 9px; border-radius: 5px; background: #f1f1f3; margin: 36px auto 0; }
</style>
